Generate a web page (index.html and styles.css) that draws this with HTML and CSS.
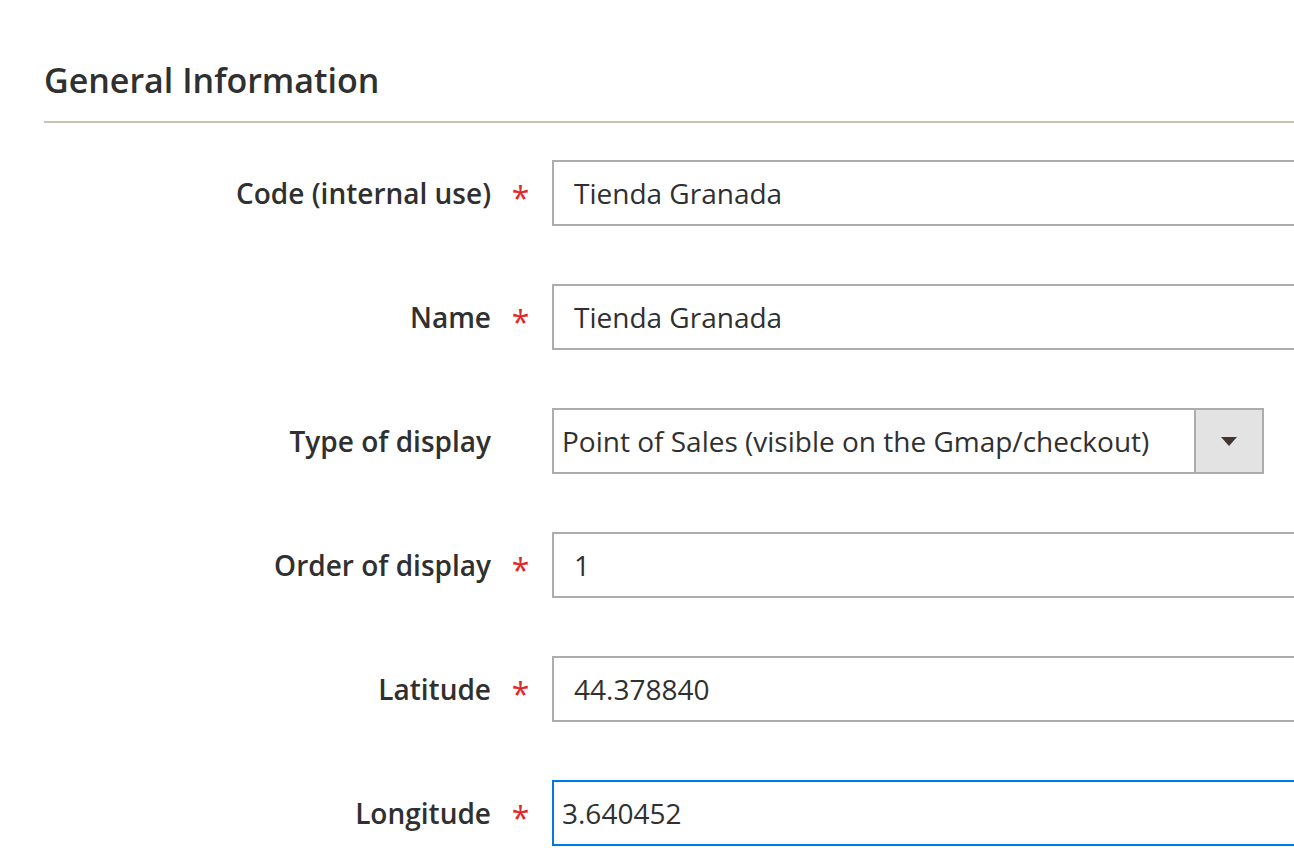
FILE: index.html
```html
<!DOCTYPE html>
<html>
<head>
<meta charset="utf-8">
<link rel="stylesheet" href="styles.css">
</head>
<body>
<div class="page">
  <h2 class="section-title">General Information</h2>
  <div class="form">
    <div class="row">
      <label class="label">Code (internal use)</label>
      <span class="req">*</span>
      <div class="input">Tienda Granada</div>
    </div>
    <div class="row">
      <label class="label">Name</label>
      <span class="req">*</span>
      <div class="input">Tienda Granada</div>
    </div>
    <div class="row">
      <label class="label">Type of display</label>
      <span class="req"></span>
      <div class="select">
        <span class="select-text">Point of Sales (visible on the Gmap/checkout)</span>
        <span class="select-btn"><span class="tri"></span></span>
      </div>
    </div>
    <div class="row">
      <label class="label">Order of display</label>
      <span class="req">*</span>
      <div class="input">1</div>
    </div>
    <div class="row">
      <label class="label">Latitude</label>
      <span class="req">*</span>
      <div class="input">44.378840</div>
    </div>
    <div class="row">
      <label class="label">Longitude</label>
      <span class="req">*</span>
      <div class="input focus">3.640452</div>
    </div>
  </div>
</div>
</body>
</html>
```

FILE: styles.css
```css
html, body {
  margin: 0;
  padding: 0;
  background: #fff;
  overflow: hidden;
}
body {
  font-family: "Open Sans", "Liberation Sans", sans-serif;
  color: #303030;
}
.page {
  padding: 54px 0 0 44px;
}
.section-title {
  margin: 0;
  font-size: 34px;
  font-weight: 600;
  line-height: 52px;
  color: #303030;
  padding-bottom: 15px;
  border-bottom: 2px solid #cac3b4;
}
.form {
  padding-top: 37px;
  display: flex;
  flex-direction: column;
  gap: 58px;
}
.row {
  display: flex;
  align-items: center;
  height: 66px;
}
.label {
  width: 447px;
  flex: none;
  text-align: right;
  font-size: 28px;
  font-weight: 600;
  color: #303030;
}
.req {
  width: 61px;
  flex: none;
  text-align: center;
  color: #e22626;
  font-size: 32px;
  font-weight: 400;
  line-height: 1;
  padding-top: 10px;
  padding-right: 2px;
  box-sizing: border-box;
}
.input {
  flex: none;
  width: 800px;
  height: 66px;
  box-sizing: border-box;
  border: 2px solid #adadad;
  padding: 0 20px;
  display: flex;
  align-items: center;
  font-size: 28px;
  color: #303030;
}
.input.focus {
  border-color: #007bdb;
  padding-left: 8px;
}
.select {
  flex: none;
  width: 712px;
  height: 66px;
  box-sizing: border-box;
  border: 2px solid #adadad;
  display: flex;
  align-items: stretch;
}
.select-text {
  flex: 1;
  display: flex;
  align-items: center;
  padding-left: 8px;
  font-size: 28px;
  color: #303030;
}
.select-btn {
  width: 66px;
  flex: none;
  background: #e3e3e3;
  border-left: 2px solid #adadad;
  display: flex;
  align-items: center;
  justify-content: center;
}
.tri {
  width: 0;
  height: 0;
  border-left: 8px solid transparent;
  border-right: 8px solid transparent;
  border-top: 9px solid #41362f;
}
```
